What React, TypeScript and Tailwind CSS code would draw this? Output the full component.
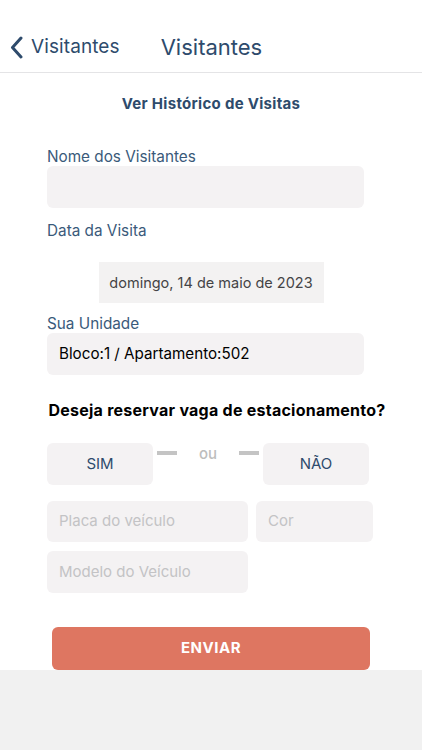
import React from 'react';

const font = { fontFamily: 'Inter, "Noto Sans", sans-serif' };

const Field: React.FC<{ className?: string; placeholder?: string }> = ({ className = '', placeholder }) => (
  <div className={`flex items-center rounded-[6px] bg-[#f4f2f3] px-3 text-[15px] text-[#c3c3c5] ${className}`}>
    {placeholder}
  </div>
);

export default function App() {
  return (
    <div className="flex h-[750px] w-[422px] flex-col bg-white" style={font}>
      <header className="flex h-[73px] items-center border-b border-[#e4e4e6] pt-[22px]">
        <button className="ml-[10px] flex items-center text-[#2e4b6c]">
          <svg width="13" height="23" viewBox="0 0 13 23" fill="none">
            <path d="M11 2L2.5 11.5L11 21" stroke="#2e4b6c" strokeWidth="3" strokeLinecap="round" strokeLinejoin="round" />
          </svg>
          <span className="ml-[8px] text-[19px] tracking-[0.1px]">Visitantes</span>
        </button>
        <h1 className="ml-[41px] text-[22px] text-[#2e4b6c]">Visitantes</h1>
      </header>

      <div className="mt-[21px] text-center text-[15px] font-bold leading-5 tracking-[0.3px] text-[#2e4b6c]">
        Ver Histórico de Visitas
      </div>

      <div className="px-[47px]">
        <div className="mt-[33px] text-[15.3px] leading-[19px] text-[#3a5a7a]">Nome dos Visitantes</div>
        <Field className="mr-[11px] h-[42px]" />

        <div className="mt-[13px] text-[15.3px] leading-[19px] text-[#3a5a7a]">Data da Visita</div>
      </div>

      <div className="mt-[22px] flex justify-center">
        <div className="flex h-[41px] w-[225px] items-center justify-center bg-[#f3f2f2] text-[14.5px] text-[#444446]">
          domingo, 14 de maio de 2023
        </div>
      </div>

      <div className="px-[47px]">
        <div className="mt-[11px] text-[15.3px] leading-[19px] text-[#3a5a7a]">Sua Unidade</div>
        <div className="mr-[11px] flex h-[42px] items-center rounded-[6px] bg-[#f4f2f3] px-3 text-[15.2px] text-black">
          Bloco:1 / Apartamento:502
        </div>
      </div>

      <div className="mt-[25px] pl-[12px] text-center text-[16px] font-bold leading-5 tracking-[0.25px] text-black">
        Deseja reservar vaga de estacionamento?
      </div>

      <div className="mt-[23px] flex w-[369px] pl-[47px]">
        <button className="flex h-[42px] w-[106px] items-center justify-center rounded-[6px] bg-[#f4f2f3] text-[15px] text-[#2e4b6c]">
          SIM
        </button>
        <div className="flex flex-1 items-start justify-between px-[4px] pt-[7px]">
          <span className="mt-[1px] h-[4px] w-[20px] bg-[#c4c4c4]" />
          <span className="-mt-[4px] text-[15px] leading-[15px] font-medium text-[#bdbdbd]">ou</span>
          <span className="mt-[1px] h-[4px] w-[20px] bg-[#c4c4c4]" />
        </div>
        <button className="flex h-[42px] w-[106px] items-center justify-center rounded-[6px] bg-[#f4f2f3] text-[15px] text-[#2e4b6c]">
          NÃO
        </button>
      </div>

      <div className="mt-[16px] flex gap-[8px] px-[47px]">
        <Field className="h-[41px] w-[201px]" placeholder="Placa do veículo" />
        <Field className="h-[41px] w-[117px]" placeholder="Cor" />
      </div>
      <div className="mt-[9px] flex px-[47px]">
        <Field className="h-[42px] w-[201px]" placeholder="Modelo do Veículo" />
      </div>

      <div className="mt-[34px] flex px-[52px]">
        <button className="flex h-[43px] w-[318px] items-center justify-center rounded-[6px] bg-[#de7661] text-[15px] font-bold tracking-[0.5px] text-white">
          ENVIAR
        </button>
      </div>

      <div className="flex-1 bg-[#f1f1f1]" />
    </div>
  );
}
